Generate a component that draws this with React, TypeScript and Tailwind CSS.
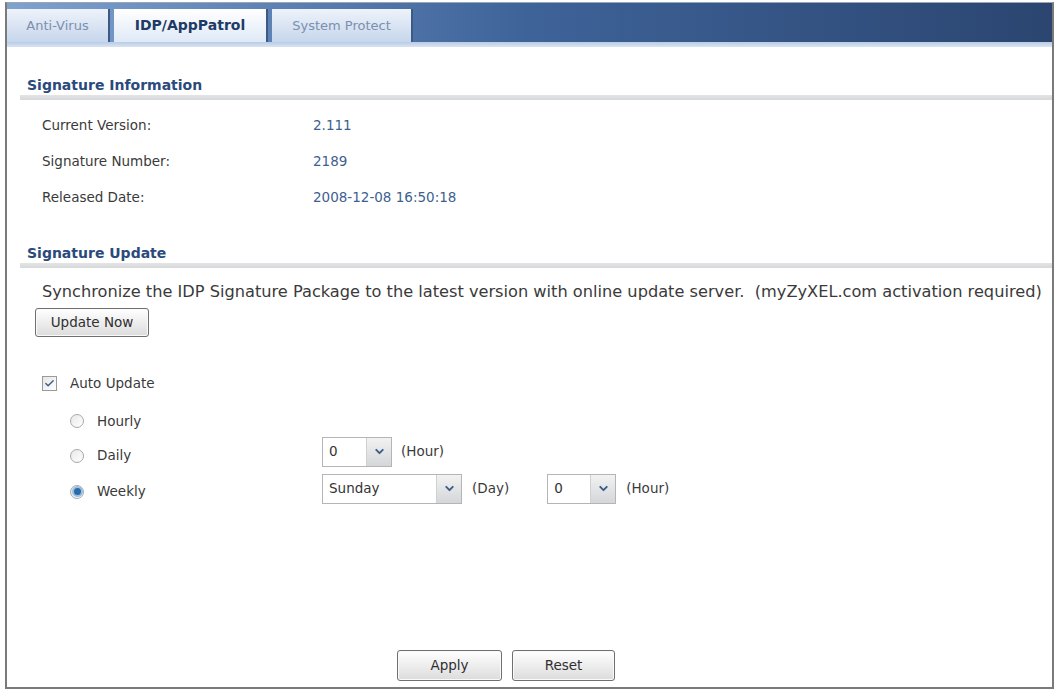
import { Check, ChevronDown } from "lucide-react";

function Tab({ label, width, active }: { label: string; width: string; active?: boolean }) {
  return (
    <div
      className={`flex items-center justify-center h-[33px] border-r-2 border-[#3c5a85] ${width} ${
        active
          ? "bg-gradient-to-b from-white to-[#dfe9f6] text-[#1e3a66] font-bold text-[14px]"
          : "bg-gradient-to-b from-[#eef3fa] to-[#c6d6ec] text-[#7b8fae] text-[13px]"
      }`}
    >
      {label}
    </div>
  );
}

function SectionTitle({ title }: { title: string }) {
  return (
    <div>
      <div className="pl-[20px] h-[20px] flex items-center text-[14px] font-bold text-[#2a4a7c]">
        {title}
      </div>
      <div className="ml-[13px] h-[5px] bg-gradient-to-b from-[#e4e4e4] to-[#d6d8db]" />
    </div>
  );
}

function InfoRow({ label, value }: { label: string; value: string }) {
  return (
    <div className="flex items-center h-[36px] pl-[35px]">
      <span className="w-[271px] text-[#3a3a3a]">{label}</span>
      <span className="text-[#3e5f8f]">{value}</span>
    </div>
  );
}

function Select({ value, width }: { value: string; width: string }) {
  return (
    <div className={`flex h-[30px] border border-[#b5b5b5] bg-white ${width}`}>
      <span className="flex-1 flex items-center pl-[6px] text-[#333]">{value}</span>
      <span className="w-[25px] flex items-center justify-center bg-gradient-to-b from-[#f2f2f2] to-[#d4d6d9] border-l border-[#d0d0d0]">
        <ChevronDown size={13} strokeWidth={3.5} className="text-[#3d5b8a]" />
      </span>
    </div>
  );
}

function Radio({ label, checked, shift = "" }: { label: string; checked?: boolean; shift?: string }) {
  return (
    <div className={`flex items-center w-[252px] ${shift}`}>
      <span className="w-[14px] h-[14px] rounded-full border border-[#a9a9a9] bg-gradient-to-br from-[#e8e8e8] to-white flex items-center justify-center">
        {checked && <span className="w-[7px] h-[7px] rounded-full bg-[#2a6aa8] ring-2 ring-[#9cc0e2]" />}
      </span>
      <span className="ml-[13px] text-[#3a3a3a]">{label}</span>
    </div>
  );
}

function Button({ label, width }: { label: string; width: string }) {
  return (
    <button
      className={`h-[29px] ${width} rounded-[3px] border border-[#6f6f6f] bg-gradient-to-b from-white to-[#dcdcdc] text-[#2f2f2f] shadow-[inset_0_0_0_1px_#fafafa]`}
    >
      {label}
    </button>
  );
}

export default function App() {
  return (
    <div className="w-[1057px] h-[689px] bg-white pl-[5px] pr-[3px] pt-[2px] [font-family:'DejaVu_Sans',sans-serif] text-[13.5px]">
      <div className="h-full flex flex-col border-l-2 border-r-2 border-b-2 border-[#7a7a7a] border-t border-t-[#9aa5b5]">
        <div className="h-[39px] flex items-end gap-[4px] bg-gradient-to-r from-[#7fa2cf] via-[#3e6399] to-[#2b4570]">
          <Tab label="Anti-Virus" width="w-[103px]" />
          <Tab label="IDP/AppPatrol" width="w-[154px]" active />
          <Tab label="System Protect" width="w-[141px]" />
        </div>
        <div className="h-[5px] bg-gradient-to-b from-[#b9cce6] to-[#d9e4f2]" />

        <div className="pt-[28px]">
          <SectionTitle title="Signature Information" />
          <div className="mt-[7px]">
            <InfoRow label="Current Version:" value="2.111" />
            <InfoRow label="Signature Number:" value="2189" />
            <InfoRow label="Released Date:" value="2008-12-08 16:50:18" />
          </div>
        </div>

        <div className="mt-[28px]">
          <SectionTitle title="Signature Update" />
          <div className="mt-[14px] pl-[35px] h-[20px] flex items-center text-[16.2px] text-[#3a3a3a] whitespace-nowrap">
            Synchronize the IDP Signature Package to the latest version with online update server.&nbsp; (myZyXEL.com activation required)
          </div>
          <div className="mt-[6px] pl-[28px]">
            <Button label="Update Now" width="w-[114px]" />
          </div>

          <div className="mt-[36px] pl-[35px] flex items-center h-[20px]">
            <span className="w-[15px] h-[15px] border border-[#9a9a9a] bg-gradient-to-br from-[#e6e6e6] to-white flex items-center justify-center">
              <Check size={11} strokeWidth={3} className="text-[#3d5b8a]" />
            </span>
            <span className="ml-[13px] text-[#3a3a3a]">Auto Update</span>
          </div>

          <div className="pl-[63px]">
            <div className="mt-[18px] h-[20px] flex items-center">
              <Radio label="Hourly" />
            </div>
            <div className="mt-[5px] h-[31px] flex items-center">
              <Radio label="Daily" shift="translate-y-[4px]" />
              <Select value="0" width="w-[70px]" />
              <span className="ml-[9px] text-[#3a3a3a]">(Hour)</span>
            </div>
            <div className="mt-[6px] h-[31px] flex items-center">
              <Radio label="Weekly" checked shift="translate-y-[3px]" />
              <Select value="Sunday" width="w-[140px]" />
              <span className="ml-[10px] text-[#3a3a3a]">(Day)</span>
              <Select value="0" width="w-[69px] ml-[38px]" />
              <span className="ml-[10px] text-[#3a3a3a]">(Hour)</span>
            </div>
          </div>
        </div>

        <div className="mt-auto mb-[6px] flex gap-[10px] pl-[390px]">
          <Button label="Apply" width="w-[105px] h-[31px]" />
          <Button label="Reset" width="w-[103px] h-[31px]" />
        </div>
      </div>
    </div>
  );
}
